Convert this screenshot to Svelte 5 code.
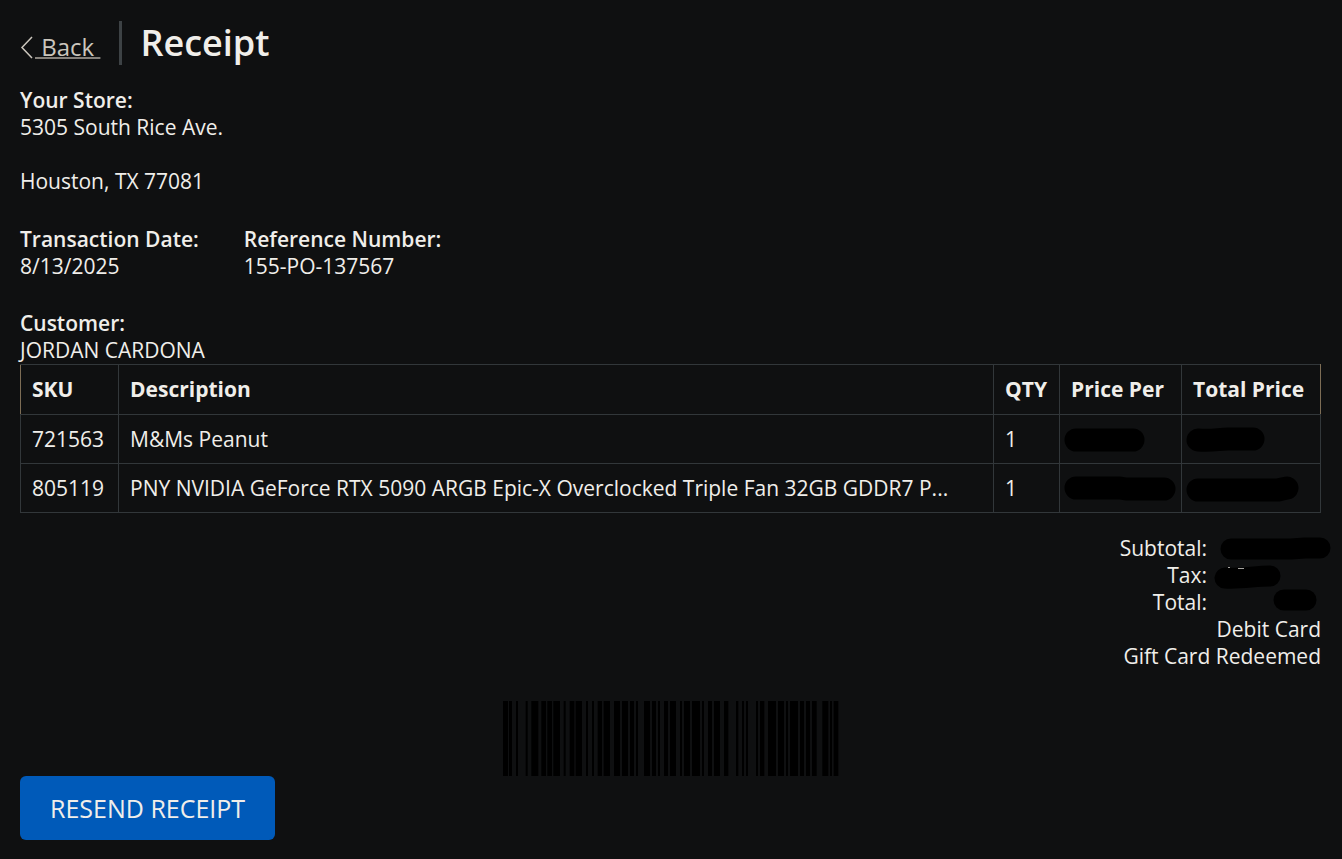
<script>
  const items = [
    { sku: '721563', description: 'M&Ms Peanut', qty: 1, per: 'M10 21h57', total: 'M10 21C26 22 30 20 40 20H65' },
    {
      sku: '805119',
      description: 'PNY NVIDIA GeForce RTX 5090 ARGB Epic-X Overclocked Triple Fan 32GB GDDR7 P...',
      qty: 1,
      per: 'M10 20H54L60 21H98',
      total: 'M10 22H90Q94 21 99 20'
    }
  ];

  const totals = [
    { label: 'Subtotal:', mask: 'M24 14H84L98 13H113' },
    { label: 'Tax:', mask: 'M18 16C34 17 48 14 63 14', specks: 'M21 5.500h2M31 6.500h6' },
    { label: 'Total:', mask: 'M77 11H99' }
  ];

  // [start, end] of each bar, three units to a pixel
  const bars = [
    [0, 15], [18, 27], [39, 45], [68, 74], [85, 106], [115, 129], [133, 147], [151, 171],
    [182, 188], [200, 214], [218, 237], [249, 255], [267, 273], [284, 297], [302, 321],
    [333, 351], [357, 375], [381, 393], [399, 405], [423, 441], [447, 459], [465, 471],
    [483, 495], [501, 519], [531, 537], [543, 561], [567, 591], [597, 603], [615, 627],
    [633, 651], [663, 676], [699, 706], [717, 723], [729, 735], [759, 765], [771, 784],
    [795, 819], [825, 843], [849, 855], [861, 885], [891, 903], [909, 921], [927, 941],
    [958, 976], [981, 987], [992, 1006]
  ];
</script>

{#snippet mask(d, specks)}
  <svg class="mask" viewBox="0 0 120 40" width="120" height="40" aria-hidden="true">
    <path {d} />
    {#if specks}
      <path class="specks" d={specks} />
    {/if}
  </svg>
{/snippet}

<main class="receipt">
  <header>
    <a class="back" href="#back">
      <svg viewBox="0 0 15 24" width="15" height="24" aria-hidden="true">
        <path d="M12 2 2 12.500 12 23" />
      </svg><span>&nbsp;Back&nbsp;</span>
    </a>
    <h1>Receipt</h1>
  </header>

  <section class="store">
    <strong>Your Store:</strong>
    <p>5305 South Rice Ave.</p>
    <p class="city">Houston, TX 77081</p>
  </section>

  <section class="details">
    <div>
      <strong>Transaction Date:</strong>
      <p>8/13/2025</p>
    </div>
    <div>
      <strong>Reference Number:</strong>
      <p>155-PO-137567</p>
    </div>
  </section>

  <section>
    <strong>Customer:</strong>
    <p>JORDAN CARDONA</p>
  </section>

  <table>
    <thead>
      <tr>
        <th class="sku">SKU</th>
        <th>Description</th>
        <th class="qty">QTY</th>
        <th class="per">Price Per</th>
        <th class="total">Total Price</th>
      </tr>
    </thead>
    <tbody>
      {#each items as item}
        <tr>
          <td>{item.sku}</td>
          <td>{item.description}</td>
          <td>{item.qty}</td>
          <td class="price">{@render mask(item.per)}</td>
          <td class="price">{@render mask(item.total)}</td>
        </tr>
      {/each}
    </tbody>
  </table>

  <section class="summary">
    {#each totals as row}
      <div class="row">
        <span>{row.label}</span>
        <span class="amount">{@render mask(row.mask, row.specks)}</span>
      </div>
    {/each}
    <p>Debit Card</p>
    <p>Gift Card Redeemed</p>
  </section>

  <svg class="barcode" viewBox="0 0 1008 225" width="336" height="75" role="img" aria-label="Barcode">
    {#each bars as [start, end]}
      <rect x={start} y="0" width={end - start} height="225" />
    {/each}
  </svg>

  <button type="button">RESEND RECEIPT</button>
</main>

<style>
  :global(body) {
    background: #0f1011;
  }

  .receipt {
    padding: 21px 21px 20px 20px;
    color: #f0eeea;
    font-family: 'Open Sans', 'Noto Sans', sans-serif;
    font-size: 21px;
    line-height: 27px;
  }

  p,
  h1 {
    margin: 0;
  }

  strong {
    display: block;
    font-weight: 600;
  }

  header {
    display: flex;
    align-items: center;
    margin-bottom: 22px;
  }

  .back {
    display: flex;
    align-items: center;
    margin-right: 19px;
    padding-top: 8px;
    color: #cbc6bd;
    font-size: 24px;
    line-height: 32px;
    text-decoration: none;
  }

  .back span {
    text-decoration: underline;
    text-decoration-color: #85817b;
    text-decoration-thickness: 2px;
  }

  .back path {
    fill: none;
    stroke: #cbc6bd;
    stroke-width: 1.5;
  }

  h1 {
    padding-left: 18px;
    border-left: 3px solid #3d4245;
    font-size: 36px;
    font-weight: 600;
    line-height: 44px;
  }

  .city {
    margin-top: 27px;
  }

  .details {
    display: flex;
    gap: 45px;
    margin: 31px 0 30px;
  }

  table {
    width: 100%;
    table-layout: fixed;
    border-collapse: collapse;
  }

  th,
  td {
    padding: 11px;
    border: 1px solid #32373a;
    text-align: left;
  }

  td {
    padding-bottom: 10px;
  }

  th {
    font-weight: 700;
    white-space: nowrap;
  }

  th:first-child {
    border-left-color: #7d6d55;
  }

  th:last-child {
    border-right-color: #7d6d55;
  }

  .sku {
    width: 75px;
  }

  .qty {
    width: 43px;
  }

  .per {
    width: 99px;
  }

  .total {
    width: 116px;
  }

  .price {
    padding: 4px 6px;
  }

  .mask {
    display: block;
    overflow: visible;
  }

  .mask path {
    fill: none;
    stroke: #000;
    stroke-width: 23;
    stroke-linecap: round;
    stroke-linejoin: round;
  }

  .summary .mask path {
    stroke-width: 21;
  }

  .summary .mask .specks {
    stroke: #a5a39f;
    stroke-width: 1;
    stroke-linecap: butt;
  }

  .summary {
    margin-top: 22px;
    text-align: right;
  }

  .row {
    display: flex;
    justify-content: flex-end;
  }

  .amount {
    width: 114px;
    height: 27px;
  }

  .barcode {
    display: block;
    margin: 31px auto 0;
  }

  button {
    display: block;
    padding: 16px 30px;
    border: 0;
    border-radius: 6px;
    background: #005ab9;
    color: #f0eeea;
    font: inherit;
    font-size: 25px;
    line-height: 32px;
    cursor: pointer;
  }
</style>
